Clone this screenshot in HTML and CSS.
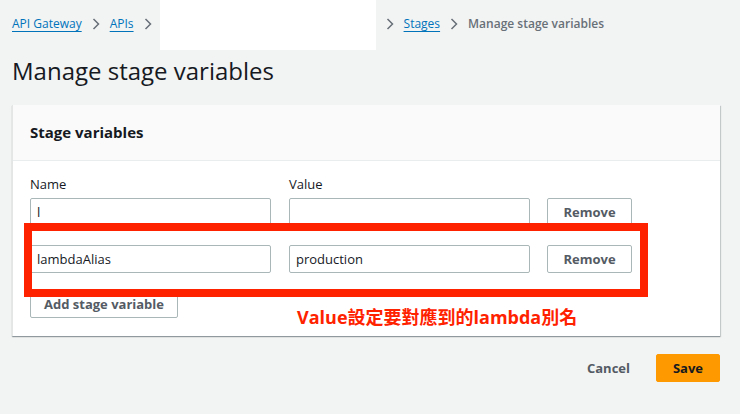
FILE: index.html
```html
<!DOCTYPE html>
<html lang="zh-Hant">
	<head>
		<meta charset="UTF-8" />
		<title>Manage stage variables</title>
		<link rel="stylesheet" href="styles.css">
	</head>
	<body>
		<div class="page">
			<nav class="crumbs">
				<a href="#">API Gateway</a>
				<svg class="chev" viewBox="0 0 8 12"><path d="M1.5 1 L6.5 6 L1.5 11" /></svg>
				<a href="#">APIs</a>
				<svg class="chev" viewBox="0 0 8 12"><path d="M1.5 1 L6.5 6 L1.5 11" /></svg>
				<span class="blank"></span>
				<svg class="chev" viewBox="0 0 8 12"><path d="M1.5 1 L6.5 6 L1.5 11" /></svg>
				<a href="#">Stages</a>
				<svg class="chev" viewBox="0 0 8 12"><path d="M1.5 1 L6.5 6 L1.5 11" /></svg>
				<span class="current">Manage stage variables</span>
			</nav>
			<div class="redact"></div>

			<h1>Manage stage variables</h1>

			<div class="card">
				<div class="card-head">Stage variables</div>
				<div class="card-body">
					<div class="row labels">
						<div class="col">Name</div>
						<div class="col">Value</div>
					</div>
					<div class="row">
						<div class="col"><div class="input">l</div></div>
						<div class="col"><div class="input"></div></div>
						<button class="btn">Remove</button>
					</div>
					<div class="row">
						<div class="col"><div class="input">lambdaAlias</div></div>
						<div class="col"><div class="input">production</div></div>
						<button class="btn">Remove</button>
					</div>
					<div class="add-row">
						<button class="btn add">Add stage variable</button>
					</div>
				</div>
				<!-- annotation -->
				<div class="mark"></div>
				<div class="note">Value設定要對應到的lambda別名</div>
			</div>

			<div class="actions">
				<button class="link-btn">Cancel</button>
				<button class="btn primary">Save</button>
			</div>
		</div>
	</body>
</html>
```

FILE: styles.css
```css
body {
	margin: 0;
	background: #f2f3f3;
	font-family: "Open Sans", "Noto Sans", "Noto Sans CJK TC", sans-serif;
	color: #16191f;
}

.page {
	position: relative;
	width: 708px;
	padding: 0 20px 0 12px;
}

.crumbs {
	display: flex;
	align-items: center;
	gap: 10px;
	height: 45px;
	padding-top: 1px;
	font-size: 12px;
}
.crumbs a {
	color: #0073bb;
	text-decoration: underline;
	text-underline-offset: 3px;
}
.chev {
	width: 8px;
	height: 12px;
	fill: none;
	stroke: #687078;
	stroke-width: 1.5;
}
.blank {
	width: 214px;
}
.current {
	color: #687078;
	font-weight: 600;
}
.redact {
	position: absolute;
	left: 160px;
	top: 0;
	width: 216px;
	height: 50px;
	background: #fff;
}

h1 {
	margin: 10px 0 0;
	font-size: 24px;
	font-weight: 400;
	line-height: 30px;
}

.card {
	position: relative;
	margin-top: 19px;
	background: #fff;
	border-left: 1px solid #e4e6e6;
	box-shadow: 0 1px 1px 0 rgba(0, 28, 36, 0.3), 1px 1px 1px 0 rgba(0, 28, 36, 0.15);
}
.card-head {
	height: 55px;
	line-height: 55px;
	padding: 0 17px;
	background: #fafafa;
	border-bottom: 1px solid #eaeded;
	font-size: 15px;
	font-weight: 700;
}
.card-body {
	padding: 14px 17px 18px;
}

.row {
	display: flex;
	gap: 18px;
	margin-bottom: 19px;
}
.row .col {
	width: 241px;
}
.labels {
	margin-bottom: 5px;
	font-size: 13px;
	line-height: 18px;
}
.input {
	box-sizing: border-box;
	height: 28px;
	line-height: 26px;
	padding: 0 6px;
	border: 1px solid #aab7b8;
	border-radius: 2px;
	font-size: 13px;
}

.btn {
	box-sizing: border-box;
	height: 28px;
	padding: 0 18px;
	background: #fff;
	border: 1px solid #aab7b8;
	border-radius: 2px;
	color: #545b64;
	font-family: inherit;
	font-size: 13px;
	font-weight: 700;
}
.row .btn {
	width: 85px;
	padding: 0;
	margin-left: -1px;
}
.add-row {
	margin-top: -2px;
}
.add {
	width: 148px;
	padding: 0;
}

.mark {
	position: absolute;
	left: 11px;
	top: 118px;
	width: 608px;
	height: 58px;
	border: 8px solid #ff2200;
}
.note {
	position: absolute;
	left: 284px;
	top: 198px;
	color: #ff2200;
	font-size: 18px;
	font-weight: 700;
}

.actions {
	display: flex;
	justify-content: flex-end;
	align-items: center;
	gap: 18px;
	margin-top: 18px;
}
.link-btn {
	background: none;
	border: none;
	color: #545b64;
	font-family: inherit;
	font-size: 13px;
	font-weight: 700;
	padding: 0 8px;
}
.primary {
	width: 64px;
	padding: 0;
	background: #ff9900;
	border-color: #ff9900;
	color: #16191f;
}
```
